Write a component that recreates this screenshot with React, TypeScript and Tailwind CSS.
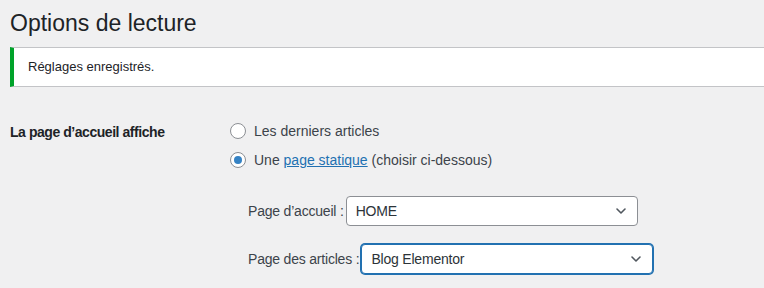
const FONT = "font-['Liberation_Sans',sans-serif]";

function Radio({ checked }: { checked?: boolean }) {
  return (
    <span className="flex h-4 w-4 shrink-0 items-center justify-center rounded-full border border-[#8c8f94] bg-white">
      {checked && <span className="h-2 w-2 rounded-full bg-[#3582c4]" />}
    </span>
  );
}

function Chevron() {
  return (
    <svg width="16" height="16" viewBox="0 0 20 20" fill="none" className="text-[#50575e]">
      <path d="M5 7.5l5 5 5-5" stroke="currentColor" strokeWidth="2" strokeLinecap="round" strokeLinejoin="round" />
    </svg>
  );
}

function Select({ value, focused }: { value: string; focused?: boolean }) {
  return (
    <div
      className={`flex h-[30px] w-[292px] items-center justify-between rounded-[4px] border bg-white pl-[9px] pr-[8px] text-[14px] text-[#2c3338] ${
        focused ? "border-[#2271b1] shadow-[0_0_0_1px_#2271b1]" : "border-[#8c8f94]"
      }`}
    >
      <span>{value}</span>
      <Chevron />
    </div>
  );
}

export default function App() {
  return (
    <div className={`h-[288px] w-[764px] overflow-hidden bg-[#f0f0f1] ${FONT} text-[#1d2327]`}>
      <h1 className="pl-[10px] pt-[8px] text-[23px] leading-[30px] font-normal text-[#1d2327]">
        Options de lecture
      </h1>
      <div className="ml-[10px] mt-[9px] flex h-[40px] items-center border-y border-[#c3c4c7] border-l-4 border-l-[#00a32a] bg-white pl-[14px] text-[13px] text-[#1d2327]">
        Réglages enregistrés.
      </div>
      <div className="mt-[33px] flex pl-[10px]">
        <div className="w-[220px] pt-[1px] text-[14px] font-semibold leading-[22px] tracking-[-0.45px] text-[#1d2327]">
          La page d’accueil affiche
        </div>
        <div className="flex flex-col text-[14px] text-[#3c434a]">
          <label className="flex h-[22px] items-center gap-[8px]">
            <Radio />
            <span>Les derniers articles</span>
          </label>
          <label className="mt-[7px] flex h-[22px] items-center gap-[8px]">
            <Radio checked />
            <span>
              Une <span className="text-[#2271b1] underline">page statique</span> (choisir ci-dessous)
            </span>
          </label>
          <div className="ml-[18px] mt-[25px] flex items-center gap-[2px] tracking-[-0.2px]">
            <span>Page d’accueil :</span>
            <Select value="HOME" />
          </div>
          <div className="ml-[18px] mt-[18px] flex items-center gap-[2px] tracking-[-0.2px]">
            <span>Page des articles :</span>
            <Select value="Blog Elementor" focused />
          </div>
        </div>
      </div>
    </div>
  );
}
